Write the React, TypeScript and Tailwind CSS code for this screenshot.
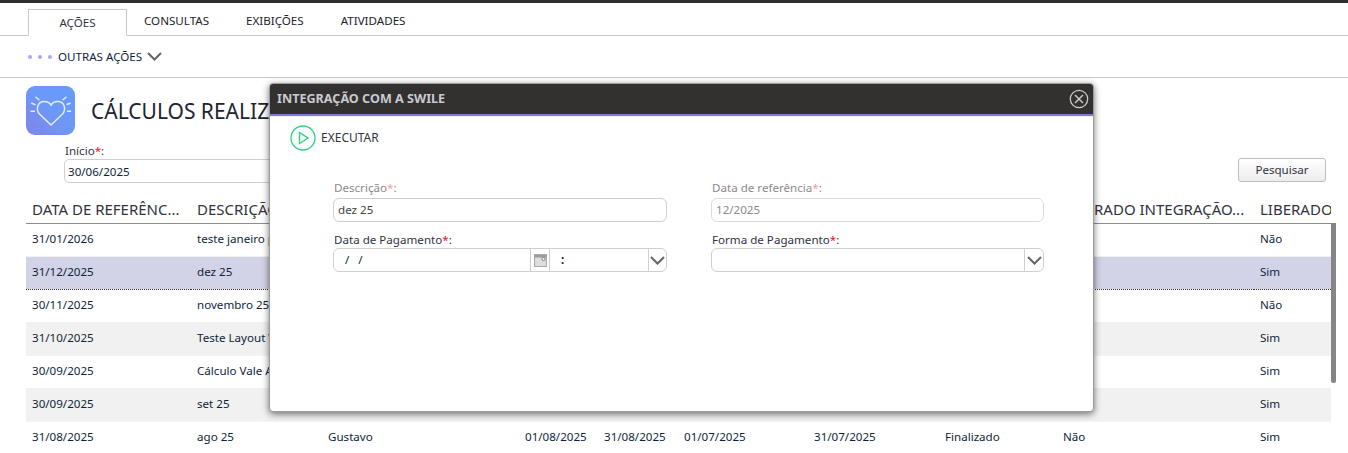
import React from 'react';

const font = { fontFamily: '"Noto Sans", Tahoma, sans-serif' };

const rows = [
  ['31/01/2026', 'teste janeiro pagamento', 'Gustavo', '01/01/2026', '31/01/2026', '01/12/2025', '31/12/2025', 'Aberto', 'Não', 'Não'],
  ['31/12/2025', 'dez 25', 'Gustavo', '01/12/2025', '31/12/2025', '01/11/2025', '30/11/2025', 'Finalizado', 'Não', 'Sim'],
  ['30/11/2025', 'novembro 25', 'Gustavo', '01/11/2025', '30/11/2025', '01/10/2025', '31/10/2025', 'Aberto', 'Não', 'Não'],
  ['31/10/2025', 'Teste Layout Vale', 'Gustavo', '01/10/2025', '31/10/2025', '01/09/2025', '30/09/2025', 'Finalizado', 'Não', 'Sim'],
  ['30/09/2025', 'Cálculo Vale Alimentação', 'Gustavo', '01/09/2025', '30/09/2025', '01/08/2025', '31/08/2025', 'Finalizado', 'Não', 'Sim'],
  ['30/09/2025', 'set 25', 'Gustavo', '01/09/2025', '30/09/2025', '01/08/2025', '31/08/2025', 'Finalizado', 'Não', 'Sim'],
  ['31/08/2025', 'ago 25', 'Gustavo', '01/08/2025', '31/08/2025', '01/07/2025', '31/07/2025', 'Finalizado', 'Não', 'Sim'],
];

const headers = [
  'DATA DE REFERÊNC...',
  'DESCRIÇÃO',
  'USUÁRIO',
  'INÍCIO',
  'FIM',
  'INÍCIO ANT.',
  'FIM ANT.',
  'SITUAÇÃO',
  'LIBERADO INTEGRAÇÃO...',
  'LIBERADO INTEGRAÇÃO',
];

const widths = [165, 131, 197, 79, 80, 130, 131, 118, 197, 77];

const Req = () => <span className="text-[#f01010]">*</span>;

const Chevron = () => (
  <svg width="15" height="9" viewBox="0 0 15 9" fill="none">
    <path d="M1 1 L7.5 7.5 L14 1" stroke="#666" strokeWidth="2" />
  </svg>
);

const HeartIcon = () => (
  <div className="w-[49px] h-[49px] rounded-[9px] bg-gradient-to-tr from-[#7f84e6] via-[#6c98f8] to-[#659bfd] flex items-center justify-center">
    <svg width="41" height="38" viewBox="0 0 41 38" fill="none" stroke="#e4edff" strokeLinecap="round">
      <path
        d="M21 33 L9.5 22 C5.5 17.5 7.5 10 13.5 9.5 C16.5 9.3 19.5 10.5 21 13 C22.5 10.5 25.5 9.3 28.5 9.5 C34.5 10 36.5 17.5 32.5 22 Z"
        strokeWidth="1.5"
      />
      <path
        d="M6 5.2 L9 7.8 M36 5.2 L33 7.8 M1.7 11.2 L5 12.5 M40 11.2 L37 12.5 M1 19.2 L4.3 19.2 M41 19.2 L37.7 19.2"
        strokeWidth="1.5"
      />
    </svg>
  </div>
);

const CalendarIcon = () => (
  <svg width="13" height="13" viewBox="0 0 13 13">
    <rect x="0.5" y="0.5" width="12" height="12" fill="#dedede" stroke="#a8a8a8" />
    <rect x="1" y="1" width="11" height="2.5" fill="#9c9c9c" />
    <circle cx="9.5" cy="5" r="1.6" fill="#f6f6f6" stroke="#777" strokeWidth="0.9" />
  </svg>
);

const Field = ({
  label,
  muted,
  labelHeight,
  children,
}: {
  label: string;
  muted?: boolean;
  labelHeight: string;
  children: React.ReactNode;
}) => (
  <div>
    <div className={`${labelHeight} flex items-center pl-px ${muted ? 'text-[#8a8a8a]' : 'text-[#33333f]'}`}>
      <span>
        {label}
        <span className={muted ? 'text-[#f59a9a]' : 'text-[#f01010]'}>*</span>:
      </span>
    </div>
    {children}
  </div>
);

export default function App() {
  return (
    <div className="relative w-[1348px] h-[453px] overflow-hidden bg-white text-[11.6px] text-[#0f1f3a]" style={font}>
      <div className="h-[3px] bg-[#2e2e2e]" />

      <div className="h-[33px] border-b border-[#c8c8c8] flex items-end pl-[28px]">
        <div className="w-[99px] h-[27px] -mb-px border border-[#c8c8c8] border-b-white bg-white flex items-center justify-center text-[#33333f]">
          AÇÕES
        </div>
        <div className="flex gap-[37px] pl-[17px] h-[24px] items-center text-[#22222c] mb-[2px]">
          <span>CONSULTAS</span>
          <span>EXIBIÇÕES</span>
          <span>ATIVIDADES</span>
        </div>
      </div>

      <div className="h-[42px] border-b border-[#c8c8c8] flex items-center pl-[28px]">
        <div className="flex gap-[6px] mr-[6px]">
          <span className="w-[4px] h-[4px] rounded-full bg-[#a9a7ee]" />
          <span className="w-[4px] h-[4px] rounded-full bg-[#a9a7ee]" />
          <span className="w-[4px] h-[4px] rounded-full bg-[#a9a7ee]" />
        </div>
        <span className="mr-[5px]">OUTRAS AÇÕES</span>
        <Chevron />
      </div>

      <div className="flex items-center pl-[26px] pt-[8px]">
        <HeartIcon />
        <h1 className="ml-[16px] text-[21px] leading-[30px] text-[#222230]">CÁLCULOS REALIZADOS</h1>
      </div>

      <div className="flex justify-between items-end pl-[64px] pr-[22px] mt-[6px]">
        <div>
          <div className="h-[18px] leading-[20px] pl-px text-[#33333f]">
            Início
            <Req />:
          </div>
          <div className="w-[300px] h-[24px] border border-[#cfcfcf] rounded-[5px] pl-[3px] leading-[24px]">30/06/2025</div>
        </div>
        <button className="w-[88px] h-[24px] mb-px border border-[#bdbdbd] rounded-[3px] bg-gradient-to-b from-white to-[#ededed] text-[#33333f]">
          Pesquisar
        </button>
      </div>

      <div className="relative ml-[26px] mt-[13px]">
        <table className="table-fixed w-[1305px] border-collapse">
          <colgroup>
            {widths.map((w, i) => (
              <col key={i} style={{ width: w }} />
            ))}
          </colgroup>
          <thead>
            <tr className="h-[27px] border-b border-[#8785cf]">
              {headers.map((h, i) => (
                <th key={i} className="pl-[6px] text-left font-normal text-[15px] text-[#33333f] whitespace-nowrap overflow-hidden">
                  {h}
                </th>
              ))}
            </tr>
          </thead>
          <tbody>
            {rows.map((row, i) => (
              <tr
                key={i}
                className={
                  i === 1
                    ? 'h-[33px] bg-[#d2d3e6] border-y border-dotted border-[#333]'
                    : i % 2 === 1
                      ? 'h-[33px] bg-[#f1f1f1] border-b border-[#f4f4f4]'
                      : 'h-[33px] border-b border-[#f1f1f1]'
                }
              >
                {row.map((cell, j) => (
                  <td key={j} className="pl-[6px] pr-[4px] pb-[2px] truncate">
                    {cell}
                  </td>
                ))}
              </tr>
            ))}
          </tbody>
        </table>
        <div className="absolute left-[1305px] top-[27px] w-[5px] h-[160px] bg-[#868686] rounded-b-[2px]" />
      </div>

      <div className="absolute left-[269px] top-[83px] w-[825px] h-[329px] bg-white border border-[#9b9b9b] rounded-[4px] shadow-[0_2px_7px_rgba(0,0,0,0.55)] overflow-hidden">
        <div className="h-[30px] bg-[#32312f] flex items-center justify-between pl-[7px] pr-[4px]">
          <span className="text-[12.6px] font-bold text-[#c9c9d2]">INTEGRAÇÃO COM A SWILE</span>
          <svg width="20" height="20" viewBox="0 0 20 20" fill="none" stroke="#c8c8c8">
            <circle cx="10" cy="10" r="8.7" strokeWidth="1.3" />
            <path d="M6 6 L14 14 M14 6 L6 14" strokeWidth="1.5" />
          </svg>
        </div>
        <div className="h-[3px] bg-[#7e7bdb] border-b border-[#efefef]" />

        <div className="flex items-center pl-[20px] pt-[8px] gap-[5px] text-[#33333f] text-[12px]">
          <svg width="26" height="26" viewBox="0 0 26 26" fill="none" stroke="#2fd27f">
            <circle cx="13" cy="13" r="12" strokeWidth="1.3" />
            <path d="M9.5 7.5 L18 13 L9.5 18.5 Z" strokeWidth="1.4" />
          </svg>
          <span>EXECUTAR</span>
        </div>

        <div className="grid grid-cols-[334px_333px] gap-x-[44px] gap-y-[10px] pl-[63px] pt-[27px]">
          <Field label="Descrição" muted labelHeight="h-[20px]">
            <div className="h-[24px] border border-[#cfcfcf] rounded-[6px] pl-[4px] leading-[22px] text-[#444]">dez 25</div>
          </Field>
          <Field label="Data de referência" muted labelHeight="h-[20px]">
            <div className="h-[24px] border border-[#dcdcdc] rounded-[6px] pl-[4px] leading-[22px] text-[#8a8a8a]">12/2025</div>
          </Field>
          <Field label="Data de Pagamento" labelHeight="h-[16px]">
            <div className="h-[24px] border border-[#cfcfcf] rounded-[6px] flex items-center">
              <div className="w-[197px] h-full pl-[11px] leading-[22px] tracking-[3px] border-r border-[#cfcfcf]">/ /</div>
              <div className="w-[19px] h-full flex items-center justify-center border-r border-[#cfcfcf]">
                <CalendarIcon />
              </div>
              <div className="flex-1 pl-[11px] font-bold">:</div>
              <div className="w-[18px] h-full flex items-center justify-center border-l border-[#cfcfcf]">
                <Chevron />
              </div>
            </div>
          </Field>
          <Field label="Forma de Pagamento" labelHeight="h-[16px]">
            <div className="h-[24px] border border-[#cfcfcf] rounded-[6px] flex items-center justify-end">
              <div className="w-[19px] h-full flex items-center justify-center border-l border-[#cfcfcf]">
                <Chevron />
              </div>
            </div>
          </Field>
        </div>
      </div>
    </div>
  );
}
